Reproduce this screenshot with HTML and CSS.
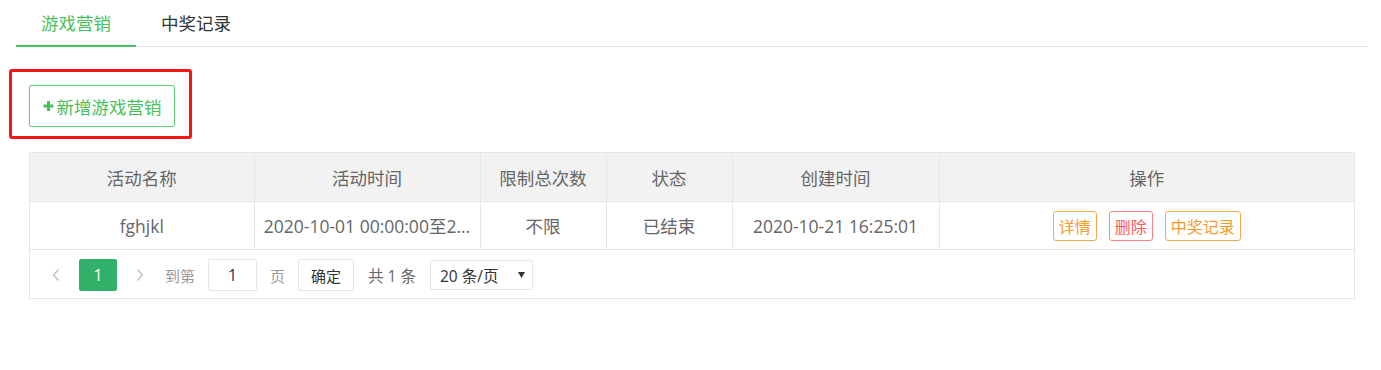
FILE: index.html
```html
<!DOCTYPE html>
<html lang="zh-CN">
<head>
<meta charset="utf-8">
<title>游戏营销</title>
<link rel="stylesheet" href="styles.css">
</head>
<body>
<div class="tabs">
  <div class="tab active">游戏营销</div>
  <div class="tab">中奖记录</div>
</div>

<div class="toolbar">
  <div class="highlight">
    <button class="btn-add" type="button">
      <svg class="plus" width="11" height="12" viewBox="0 0 11 12"><path d="M5.5 1v10M0.5 6h10" stroke="#47c15e" stroke-width="3" fill="none"/></svg>新增游戏营销
    </button>
  </div>
</div>

<div class="grid">
  <table class="data">
    <colgroup>
      <col class="c1"><col class="c2"><col class="c3"><col class="c4"><col class="c5"><col>
    </colgroup>
    <thead>
      <tr>
        <th>活动名称</th>
        <th>活动时间</th>
        <th>限制总次数</th>
        <th>状态</th>
        <th>创建时间</th>
        <th>操作</th>
      </tr>
    </thead>
    <tbody>
      <tr>
        <td>fghjkl</td>
        <td>2020-10-01 00:00:00至2...</td>
        <td>不限</td>
        <td>已结束</td>
        <td>2020-10-21 16:25:01</td>
        <td>
          <div class="ops">
            <span class="op warm">详情</span>
            <span class="op danger">删除</span>
            <span class="op warm">中奖记录</span>
          </div>
        </td>
      </tr>
    </tbody>
  </table>
  <div class="pager">
    <span class="pg-arrow"><svg width="8" height="12" viewBox="0 0 8 12"><polyline points="6.5,0.5 1.5,6 6.5,11.5" fill="none" stroke="#bdbdbd" stroke-width="1.3"/></svg></span>
    <span class="pg-curr">1</span>
    <span class="pg-arrow next"><svg width="8" height="12" viewBox="0 0 8 12"><polyline points="1.5,0.5 6.5,6 1.5,11.5" fill="none" stroke="#bdbdbd" stroke-width="1.3"/></svg></span>
    <span class="pg-text goto">到第</span>
    <span class="pg-input">1</span>
    <span class="pg-text">页</span>
    <span class="pg-btn">确定</span>
    <span class="pg-count">共 1 条</span>
    <span class="pg-select">20 条/页<svg width="7" height="6" viewBox="0 0 7 6"><polygon points="0,0 7,0 3.5,6" fill="#333"/></svg></span>
  </div>
</div>
</body>
</html>
```

FILE: styles.css
```css
html, body {
  margin: 0;
  padding: 0;
  background: #fff;
}

body {
  font-family: "Open Sans", "Noto Sans CJK SC", sans-serif;
  font-size: 17.5px;
  color: #666;
}

.tabs {
  display: flex;
  height: 46px;
  margin: 0 13px 0 16px;
  border-bottom: 1px solid #e6e6e6;
}

.tab {
  position: relative;
  padding: 0 25px;
  line-height: 46px;
  color: #333;
  white-space: nowrap;
}

.tab.active {
  color: #47c15e;
}

.tab.active::after {
  content: "";
  position: absolute;
  left: 0;
  right: 0;
  bottom: -1px;
  height: 2px;
  background: #47c15e;
}

.toolbar {
  display: flex;
  margin-top: 22px;
  padding-left: 9px;
}

.highlight {
  border: 3px solid #fa1515;
  border-radius: 3px;
  padding: 13px 14px 9px 17px;
}

.btn-add {
  display: flex;
  align-items: center;
  justify-content: center;
  gap: 3px;
  box-sizing: border-box;
  width: 146px;
  height: 42px;
  padding: 0;
  border: 1px solid #5ccf70;
  border-radius: 2px;
  background: #fff;
  color: #47c15e;
  font-family: inherit;
  font-size: 17.5px;
  cursor: pointer;
}

.plus {
  display: block;
}

.grid {
  margin: 13px 26px 0 29px;
  border: 1px solid #e6e6e6;
}

.data {
  width: 100%;
  border-collapse: collapse;
  table-layout: fixed;
}

.c1 { width: 224px; }
.c2 { width: 226px; }
.c3 { width: 126px; }
.c4 { width: 126px; }
.c5 { width: 207px; }

.data th,
.data td {
  padding: 0 8px;
  text-align: center;
  white-space: nowrap;
  overflow: hidden;
  text-overflow: ellipsis;
  border-right: 1px solid #e6e6e6;
  border-bottom: 1px solid #e6e6e6;
  color: #666;
}

.data th:last-child,
.data td:last-child {
  border-right: none;
}

.data th {
  height: 48px;
  background: #f2f2f2;
  font-weight: normal;
}

.data td {
  height: 47px;
}

.ops {
  display: flex;
  justify-content: center;
  gap: 12px;
}

.op {
  display: inline-flex;
  align-items: center;
  box-sizing: border-box;
  height: 30px;
  padding: 0 5px;
  border: 1px solid;
  border-radius: 3px;
  font-size: 16px;
  background: #fff;
}

.op.warm {
  color: #f59b2b;
  border-color: #f8a94c;
}

.op.danger {
  color: #ff5a5f;
  border-color: #ff8085;
}

.pager {
  display: flex;
  align-items: center;
  padding: 9px 0 7px 7px;
  font-size: 15px;
}

.pg-arrow {
  display: flex;
  align-items: center;
  justify-content: center;
  width: 38px;
  height: 32px;
}

.pg-arrow.next {
  margin-left: 4px;
  width: 38px;
}

.pg-curr {
  display: flex;
  align-items: center;
  justify-content: center;
  margin-left: 4px;
  width: 38px;
  height: 32px;
  border-radius: 2px;
  background: #31b06a;
  color: #fff;
  font-size: 16px;
}

.pg-text {
  margin-left: 13px;
  color: #999;
}

.pg-text.goto {
  margin-left: 6px;
}

.pg-input,
.pg-btn {
  display: flex;
  align-items: center;
  justify-content: center;
  box-sizing: border-box;
  margin-left: 13px;
  height: 32px;
  border: 1px solid #e6e6e6;
  border-radius: 2px;
  color: #333;
  background: #fff;
}

.pg-input {
  width: 49px;
  font-size: 16px;
}

.pg-btn {
  width: 56px;
}

.pg-count {
  margin-left: 14px;
  color: #666;
  font-size: 15.5px;
}

.pg-select {
  display: flex;
  align-items: center;
  justify-content: space-between;
  box-sizing: border-box;
  margin-left: 14px;
  width: 103px;
  height: 30px;
  padding: 0 7px 0 9px;
  border: 1px solid #e6e6e6;
  border-radius: 2px;
  color: #333;
  background: #fff;
  font-size: 15.5px;
}
```
